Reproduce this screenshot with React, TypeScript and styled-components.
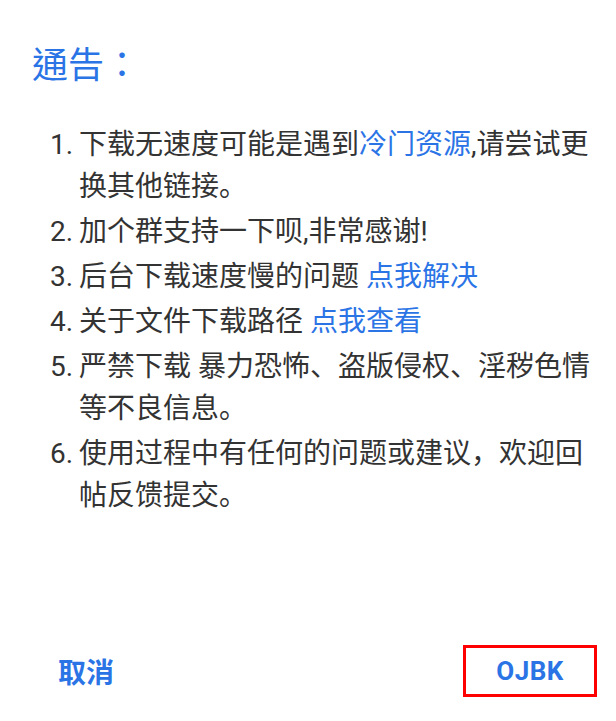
import styled, { createGlobalStyle } from 'styled-components';

const GlobalStyle = createGlobalStyle`
  html, body {
    margin: 0;
    padding: 0;
    background: #ffffff;
  }
  body {
    font-family: Roboto, "Noto Sans CJK SC", sans-serif;
  }
`;

const Dialog = styled.div`
  box-sizing: border-box;
  min-height: 100vh;
  display: flex;
  flex-direction: column;
  padding: 38px 19px 24px 32px;
`;

const Title = styled.h1`
  margin: 0;
  color: #2b74e6;
  font-family: "Noto Sans CJK TC", "Noto Sans CJK SC", sans-serif;
  font-size: 36px;
  font-weight: normal;
  line-height: 48px;
`;

const List = styled.ol`
  list-style: none;
  margin: 38px 0 0 0;
  padding: 0 0 0 18px;
  display: flex;
  flex-direction: column;
  gap: 3px;
`;

const Item = styled.li`
  display: grid;
  grid-template-columns: 29px 1fr;
  color: #333333;
  font-size: 28px;
  line-height: 42px;
`;

const Num = styled.span``;

const Link = styled.a`
  color: #2b74e6;
  text-decoration: none;
`;

const Footer = styled.div`
  margin-top: auto;
  display: flex;
  justify-content: space-between;
  align-items: center;
`;

const Button = styled.button<{ $boxed?: boolean }>`
  box-sizing: border-box;
  height: 52px;
  padding: 0 ${(p) => (p.$boxed ? '29px' : '23px')};
  background: none;
  border: 3px solid ${(p) => (p.$boxed ? '#ff0000' : 'transparent')};
  width: ${(p) => (p.$boxed ? '134px' : 'auto')};
  color: #2b74e6;
  font-family: Roboto, "Noto Sans CJK SC", sans-serif;
  font-size: ${(p) => (p.$boxed ? '26px' : '28px')};
  font-weight: 700;
  letter-spacing: ${(p) => (p.$boxed ? '0.5px' : '0')};
  cursor: pointer;
`;

const items: React.ReactNode[] = [
  <>下载无速度可能是遇到<Link href="#">冷门资源</Link>,请尝试更换其他链接。</>,
  <>加个群支持一下呗,非常感谢!</>,
  <>后台下载速度慢的问题 <Link href="#">点我解决</Link></>,
  <>关于文件下载路径 <Link href="#">点我查看</Link></>,
  <>严禁下载 暴力恐怖、盗版侵权、淫秽色情等不良信息。</>,
  <>使用过程中有任何的问题或建议，欢迎回帖反馈提交。</>,
];

export default function App() {
  return (
    <Dialog>
      <GlobalStyle />
      <Title>通告：</Title>
      <List>
        {items.map((text, i) => (
          <Item key={i}>
            <Num>{i + 1}.</Num>
            <span>{text}</span>
          </Item>
        ))}
      </List>
      <Footer>
        <Button>取消</Button>
        <Button $boxed>OJBK</Button>
      </Footer>
    </Dialog>
  );
}
